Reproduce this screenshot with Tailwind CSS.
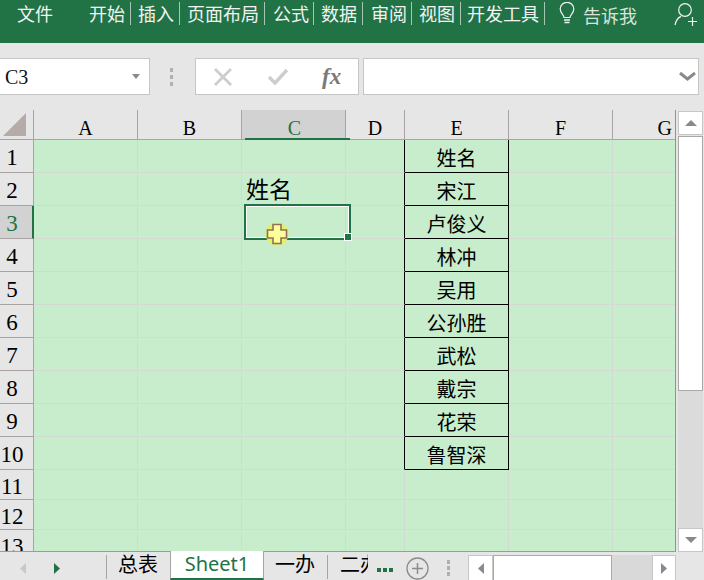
<!DOCTYPE html>
<html lang="zh">
<head>
<meta charset="utf-8">
<script src="https://cdn.jsdelivr.net/npm/@tailwindcss/browser@4"></script>
</head>
<body class="m-0">
<div class="relative w-[704px] h-[580px] overflow-hidden bg-[#e6e6e6] flex flex-col font-['Noto_Sans_CJK_SC',sans-serif]">

  <!-- Ribbon tabs -->
  <div class="h-[43px] shrink-0 bg-[#217346] text-[#f2f2f2] text-[18px] leading-[26px] flex items-start pl-[17px]">
    <div class="h-[26px] mr-[36px]">文件</div>
    <div class="h-[26px]">开始</div><div class="w-px h-[23px] mt-[2px] ml-[5px] mr-[7px] bg-white/60"></div>
    <div class="h-[26px]">插入</div><div class="w-px h-[23px] mt-[2px] ml-[5px] mr-[7px] bg-white/60"></div>
    <div class="h-[26px]">页面布局</div><div class="w-px h-[23px] mt-[2px] ml-[5px] mr-[8px] bg-white/60"></div>
    <div class="h-[26px]">公式</div><div class="w-px h-[23px] mt-[2px] ml-[4px] mr-[7px] bg-white/60"></div>
    <div class="h-[26px]">数据</div><div class="w-px h-[23px] mt-[2px] ml-[5px] mr-[8px] bg-white/60"></div>
    <div class="h-[26px]">审阅</div><div class="w-px h-[23px] mt-[2px] ml-[4px] mr-[7px] bg-white/60"></div>
    <div class="h-[26px]">视图</div><div class="w-px h-[23px] mt-[2px] ml-[5px] mr-[6px] bg-white/60"></div>
    <div class="h-[26px]">开发工具</div><div class="w-px h-[23px] mt-[2px] ml-[5px] mr-[14px] bg-white/60"></div>
    <svg class="mt-[2px] shrink-0" width="16" height="23" viewBox="0 0 16 23" fill="none" stroke="#f2f2f2" stroke-width="1.2">
      <path d="M5 15.500c0-2.500-3.800-4.200-3.800-8.400a6.800 6.800 0 0 1 13.600 0c0 4.200-3.800 5.900-3.800 8.400z"/>
      <path d="M5 18h6M5.500 20.500h5" stroke-width="1.600"/>
    </svg>
    <div class="h-[26px] ml-[8px] text-[#d9e3dc] pt-[2px]">告诉我</div>
    <svg class="ml-[37px] mt-[2px] shrink-0" width="24" height="24" viewBox="0 0 24 24" fill="none" stroke="#f2f2f2" stroke-width="1.2">
      <circle cx="11" cy="8" r="6.300"/>
      <path d="M1 23c1-4.500 3.500-7.500 6-8.600"/>
      <path d="M14 19.500h9M18.500 15v9"/>
    </svg>
  </div>

  <!-- Formula bar -->
  <div class="h-[67px] shrink-0 flex items-start pt-[15px]">
    <div class="w-[150px] h-[37px] bg-white border border-[#c6c6c6] border-l-0 flex items-center justify-between pl-[5px] pr-[9px]">
      <span class="text-[20px] text-[#111] font-['Liberation_Serif',serif]">C3</span>
      <svg width="8" height="5" viewBox="0 0 8 5"><path d="M0 0h8L4 5z" fill="#858a91"/></svg>
    </div>
    <div class="w-[3px] ml-[20px] mt-[10px] flex flex-col gap-[3px]">
      <div class="h-[4px] bg-[#b5aeae]"></div><div class="h-[4px] bg-[#b5aeae]"></div><div class="h-[4px] bg-[#b5aeae]"></div>
    </div>
    <div class="w-[164px] h-[37px] ml-[22px] bg-white border border-[#c6c6c6] flex items-center relative">
      <svg class="ml-[18px]" width="18" height="18" viewBox="0 0 18 18" stroke="#cdcdcd" stroke-width="2.800" fill="none"><path d="M1 1l16 16M17 1L1 17"/></svg>
      <svg class="ml-[36px]" width="20" height="17" viewBox="0 0 20 17" stroke="#cdcdcd" stroke-width="3.400" fill="none"><path d="M1 9l6 6L19 2"/></svg>
      <span class="ml-[34px] text-[23px] leading-none font-bold italic text-[#7a7a7a] font-['Liberation_Serif',serif]">fx</span>
    </div>
    <div class="w-[336px] h-[37px] ml-[4px] bg-white border border-[#c6c6c6] flex items-center justify-end pr-[2px]">
      <svg width="17" height="9" viewBox="0 0 17 9" fill="none" stroke="#858a91" stroke-width="3"><path d="M1 1l7.500 6L16 1"/></svg>
    </div>
  </div>

  <!-- Sheet area -->
  <div class="h-[441px] shrink-0 flex">
    <div class="w-[676px] h-[441px] overflow-hidden grid grid-cols-[34px_104px_104px_104px_59px_104px_104px_63px] grid-rows-[30px_repeat(10,33px)_30px_30px_21px] text-black text-[20px] border-r border-[#8f948f]">
      <!-- header -->
      <div class="border-r border-b border-[#a8a4a4] flex items-end justify-center pb-[3px]">
        <svg width="23" height="23" viewBox="0 0 23 23" class="mr-[4px]"><path d="M23 0v23H0z" fill="#b5aba8"/></svg>
      </div>
      <div class="border-r border-b border-[#a8a4a4] text-center leading-[36px] font-['Liberation_Serif',serif]">A</div>
      <div class="border-r border-b border-[#a8a4a4] text-center leading-[36px] font-['Liberation_Serif',serif]">B</div>
      <div class="bg-[#d2d2d2] border-r border-b border-[#a8a4a4] text-center pl-[2px] leading-[36px] text-[#217346] font-['Liberation_Serif',serif]">C</div>
      <div class="border-r border-b border-[#a8a4a4] text-center leading-[36px] font-['Liberation_Serif',serif]">D</div>
      <div class="border-r border-b border-[#a8a4a4] text-center leading-[36px] font-['Liberation_Serif',serif]">E</div>
      <div class="border-r border-b border-[#a8a4a4] text-center leading-[36px] font-['Liberation_Serif',serif]">F</div>
      <div class="border-b border-[#a8a4a4] text-right pr-[4px] leading-[36px] font-['Liberation_Serif',serif]">G</div>

      <!-- row 1 -->
      <div class="border-r border-b border-[#a8a4a4] pr-[9px] text-center leading-[36px] text-[23px] font-['Liberation_Serif',serif]">1</div>
      <div class="bg-[#c7edcc] border-r border-b border-[#d3d9d3]"></div><div class="bg-[#c7edcc] border-r border-b border-[#d3d9d3]"></div><div class="bg-[#c7edcc] border-r border-b border-[#d3d9d3]"></div>
      <div class="bg-[#c7edcc] border-r border-b border-r-black border-b-[#d3d9d3]"></div>
      <div class="bg-[#c7edcc] border-r border-b border-black text-center leading-[36px]">姓名</div>
      <div class="bg-[#c7edcc] border-r border-b border-[#d3d9d3]"></div><div class="bg-[#c7edcc] border-b border-[#d3d9d3]"></div>
      <!-- row 2 -->
      <div class="border-r border-b border-[#a8a4a4] pr-[9px] text-center leading-[36px] text-[23px] font-['Liberation_Serif',serif]">2</div>
      <div class="bg-[#c7edcc] border-r border-b border-[#d3d9d3]"></div><div class="bg-[#c7edcc] border-r border-b border-[#d3d9d3]"></div>
      <div class="bg-[#c7edcc] border-r border-b border-[#d3d9d3] pl-[4px] text-[23px] leading-[30px] whitespace-nowrap">姓名</div>
      <div class="bg-[#c7edcc] border-r border-b border-r-black border-b-[#d3d9d3]"></div>
      <div class="bg-[#c7edcc] border-r border-b border-black text-center leading-[36px]">宋江</div>
      <div class="bg-[#c7edcc] border-r border-b border-[#d3d9d3]"></div><div class="bg-[#c7edcc] border-b border-[#d3d9d3]"></div>
      <!-- row 3 -->
      <div class="bg-[#d2d2d2] border-r-2 border-r-[#217346] border-b border-b-[#a8a4a4] pr-[8px] text-center leading-[36px] text-[23px] text-[#217346] font-['Liberation_Serif',serif]">3</div>
      <div class="bg-[#c7edcc] border-r border-b border-[#d3d9d3]"></div><div class="bg-[#c7edcc] border-r border-b border-[#d3d9d3]"></div><div class="bg-[#c7edcc] border-r border-b border-[#d3d9d3]"></div>
      <div class="bg-[#c7edcc] border-r border-b border-r-black border-b-[#d3d9d3]"></div>
      <div class="bg-[#c7edcc] border-r border-b border-black text-center leading-[36px]">卢俊义</div>
      <div class="bg-[#c7edcc] border-r border-b border-[#d3d9d3]"></div><div class="bg-[#c7edcc] border-b border-[#d3d9d3]"></div>
      <!-- row 4 -->
      <div class="border-r border-b border-[#a8a4a4] pr-[9px] text-center leading-[36px] text-[23px] font-['Liberation_Serif',serif]">4</div>
      <div class="bg-[#c7edcc] border-r border-b border-[#d3d9d3]"></div><div class="bg-[#c7edcc] border-r border-b border-[#d3d9d3]"></div><div class="bg-[#c7edcc] border-r border-b border-[#d3d9d3]"></div>
      <div class="bg-[#c7edcc] border-r border-b border-r-black border-b-[#d3d9d3]"></div>
      <div class="bg-[#c7edcc] border-r border-b border-black text-center leading-[36px]">林冲</div>
      <div class="bg-[#c7edcc] border-r border-b border-[#d3d9d3]"></div><div class="bg-[#c7edcc] border-b border-[#d3d9d3]"></div>
      <!-- row 5 -->
      <div class="border-r border-b border-[#a8a4a4] pr-[9px] text-center leading-[36px] text-[23px] font-['Liberation_Serif',serif]">5</div>
      <div class="bg-[#c7edcc] border-r border-b border-[#d3d9d3]"></div><div class="bg-[#c7edcc] border-r border-b border-[#d3d9d3]"></div><div class="bg-[#c7edcc] border-r border-b border-[#d3d9d3]"></div>
      <div class="bg-[#c7edcc] border-r border-b border-r-black border-b-[#d3d9d3]"></div>
      <div class="bg-[#c7edcc] border-r border-b border-black text-center leading-[36px]">吴用</div>
      <div class="bg-[#c7edcc] border-r border-b border-[#d3d9d3]"></div><div class="bg-[#c7edcc] border-b border-[#d3d9d3]"></div>
      <!-- row 6 -->
      <div class="border-r border-b border-[#a8a4a4] pr-[9px] text-center leading-[36px] text-[23px] font-['Liberation_Serif',serif]">6</div>
      <div class="bg-[#c7edcc] border-r border-b border-[#d3d9d3]"></div><div class="bg-[#c7edcc] border-r border-b border-[#d3d9d3]"></div><div class="bg-[#c7edcc] border-r border-b border-[#d3d9d3]"></div>
      <div class="bg-[#c7edcc] border-r border-b border-r-black border-b-[#d3d9d3]"></div>
      <div class="bg-[#c7edcc] border-r border-b border-black text-center leading-[36px]">公孙胜</div>
      <div class="bg-[#c7edcc] border-r border-b border-[#d3d9d3]"></div><div class="bg-[#c7edcc] border-b border-[#d3d9d3]"></div>
      <!-- row 7 -->
      <div class="border-r border-b border-[#a8a4a4] pr-[9px] text-center leading-[36px] text-[23px] font-['Liberation_Serif',serif]">7</div>
      <div class="bg-[#c7edcc] border-r border-b border-[#d3d9d3]"></div><div class="bg-[#c7edcc] border-r border-b border-[#d3d9d3]"></div><div class="bg-[#c7edcc] border-r border-b border-[#d3d9d3]"></div>
      <div class="bg-[#c7edcc] border-r border-b border-r-black border-b-[#d3d9d3]"></div>
      <div class="bg-[#c7edcc] border-r border-b border-black text-center leading-[36px]">武松</div>
      <div class="bg-[#c7edcc] border-r border-b border-[#d3d9d3]"></div><div class="bg-[#c7edcc] border-b border-[#d3d9d3]"></div>
      <!-- row 8 -->
      <div class="border-r border-b border-[#a8a4a4] pr-[9px] text-center leading-[36px] text-[23px] font-['Liberation_Serif',serif]">8</div>
      <div class="bg-[#c7edcc] border-r border-b border-[#d3d9d3]"></div><div class="bg-[#c7edcc] border-r border-b border-[#d3d9d3]"></div><div class="bg-[#c7edcc] border-r border-b border-[#d3d9d3]"></div>
      <div class="bg-[#c7edcc] border-r border-b border-r-black border-b-[#d3d9d3]"></div>
      <div class="bg-[#c7edcc] border-r border-b border-black text-center leading-[36px]">戴宗</div>
      <div class="bg-[#c7edcc] border-r border-b border-[#d3d9d3]"></div><div class="bg-[#c7edcc] border-b border-[#d3d9d3]"></div>
      <!-- row 9 -->
      <div class="border-r border-b border-[#a8a4a4] pr-[9px] text-center leading-[36px] text-[23px] font-['Liberation_Serif',serif]">9</div>
      <div class="bg-[#c7edcc] border-r border-b border-[#d3d9d3]"></div><div class="bg-[#c7edcc] border-r border-b border-[#d3d9d3]"></div><div class="bg-[#c7edcc] border-r border-b border-[#d3d9d3]"></div>
      <div class="bg-[#c7edcc] border-r border-b border-r-black border-b-[#d3d9d3]"></div>
      <div class="bg-[#c7edcc] border-r border-b border-black text-center leading-[36px]">花荣</div>
      <div class="bg-[#c7edcc] border-r border-b border-[#d3d9d3]"></div><div class="bg-[#c7edcc] border-b border-[#d3d9d3]"></div>
      <!-- row 10 -->
      <div class="border-r border-b border-[#a8a4a4] pr-[9px] text-center leading-[36px] text-[23px] font-['Liberation_Serif',serif]">10</div>
      <div class="bg-[#c7edcc] border-r border-b border-[#d3d9d3]"></div><div class="bg-[#c7edcc] border-r border-b border-[#d3d9d3]"></div><div class="bg-[#c7edcc] border-r border-b border-[#d3d9d3]"></div>
      <div class="bg-[#c7edcc] border-r border-b border-r-black border-b-[#d3d9d3]"></div>
      <div class="bg-[#c7edcc] border-r border-b border-black text-center leading-[36px]">鲁智深</div>
      <div class="bg-[#c7edcc] border-r border-b border-[#d3d9d3]"></div><div class="bg-[#c7edcc] border-b border-[#d3d9d3]"></div>
      <!-- row 11 -->
      <div class="border-r border-b border-[#a8a4a4] pr-[9px] text-center leading-[34px] text-[23px] font-['Liberation_Serif',serif]">11</div>
      <div class="bg-[#c7edcc] border-r border-b border-[#d3d9d3]"></div><div class="bg-[#c7edcc] border-r border-b border-[#d3d9d3]"></div><div class="bg-[#c7edcc] border-r border-b border-[#d3d9d3]"></div><div class="bg-[#c7edcc] border-r border-b border-[#d3d9d3]"></div><div class="bg-[#c7edcc] border-r border-b border-[#d3d9d3]"></div><div class="bg-[#c7edcc] border-r border-b border-[#d3d9d3]"></div><div class="bg-[#c7edcc] border-b border-[#d3d9d3]"></div>
      <!-- row 12 -->
      <div class="border-r border-b border-[#a8a4a4] pr-[9px] text-center leading-[34px] text-[23px] font-['Liberation_Serif',serif]">12</div>
      <div class="bg-[#c7edcc] border-r border-b border-[#d3d9d3]"></div><div class="bg-[#c7edcc] border-r border-b border-[#d3d9d3]"></div><div class="bg-[#c7edcc] border-r border-b border-[#d3d9d3]"></div><div class="bg-[#c7edcc] border-r border-b border-[#d3d9d3]"></div><div class="bg-[#c7edcc] border-r border-b border-[#d3d9d3]"></div><div class="bg-[#c7edcc] border-r border-b border-[#d3d9d3]"></div><div class="bg-[#c7edcc] border-b border-[#d3d9d3]"></div>
      <!-- row 13 -->
      <div class="border-r border-[#a8a4a4] pr-[9px] text-center leading-[34px] text-[23px] overflow-hidden font-['Liberation_Serif',serif]">13</div>
      <div class="bg-[#c7edcc] border-r border-[#d3d9d3]"></div><div class="bg-[#c7edcc] border-r border-[#d3d9d3]"></div><div class="bg-[#c7edcc] border-r border-[#d3d9d3]"></div><div class="bg-[#c7edcc] border-r border-[#d3d9d3]"></div><div class="bg-[#c7edcc] border-r border-[#d3d9d3]"></div><div class="bg-[#c7edcc] border-r border-[#d3d9d3]"></div><div class="bg-[#c7edcc]"></div>
    </div>

    <!-- Vertical scrollbar -->
    <div class="w-[28px] h-[442px] pl-[2px] pr-px pt-px flex flex-col">
      <div class="h-[24px] shrink-0 bg-white border border-[#c6c6c6] flex items-center justify-center">
        <svg width="12" height="6" viewBox="0 0 12 6"><path d="M6 0l6 6H0z" fill="#858a91"/></svg>
      </div>
      <div class="h-[255px] shrink-0 mt-px bg-white border border-[#ada8a8]"></div>
      <div class="flex-1 bg-[#dbdbdb]"></div>
      <div class="h-[24px] shrink-0 bg-white border border-[#c6c6c6] flex items-center justify-center">
        <svg width="12" height="6" viewBox="0 0 12 6"><path d="M0 0h12L6 6z" fill="#858a91"/></svg>
      </div>
    </div>
  </div>

  <!-- Sheet tabs -->
  <div class="h-[29px] shrink-0 border-t border-[#9b9b9b] flex items-start text-[20px] leading-[24px] text-black w-[676px]">
    <svg class="ml-[20px] mt-[11px] shrink-0" width="6" height="11" viewBox="0 0 6 11"><path d="M6 0v11L0 5.500z" fill="#c8c8c8"/></svg>
    <svg class="ml-[28px] mt-[11px] shrink-0" width="6" height="11" viewBox="0 0 6 11"><path d="M0 0v11l6-5.500z" fill="#217346"/></svg>
    <div class="w-px h-[24px] mt-[3px] ml-[46px] bg-[#a8a4a4] shrink-0"></div>
    <div class="ml-[11px] w-[40px] shrink-0">总表</div>
    <div class="ml-[12px] w-[94px] h-[29px] -mt-px pt-px bg-white border-x border-[#a8a4a4] border-b-2 border-b-[#217346] text-center text-[#217346] font-['Noto_Sans',sans-serif] shrink-0">Sheet1</div>
    <div class="ml-[11px] w-[40px] shrink-0">一办</div>
    <div class="w-px h-[24px] mt-[3px] ml-[12px] bg-[#a8a4a4] shrink-0"></div>
    <div class="ml-[12px] w-[28px] overflow-hidden whitespace-nowrap shrink-0">二办</div>
    <div class="ml-[9px] mt-[16px] flex gap-[2px] shrink-0">
      <div class="w-[4px] h-[4px] bg-[#217346]"></div><div class="w-[4px] h-[4px] bg-[#217346]"></div><div class="w-[4px] h-[4px] bg-[#217346]"></div>
    </div>
    <svg class="ml-[13px] mt-[5px] shrink-0" width="23" height="23" viewBox="0 0 23 23" fill="none" stroke="#8c8c8c"><circle cx="11.500" cy="11.500" r="10.500" stroke-width="1.300"/><path d="M6 11.500h11M11.500 6v11" stroke-width="1.500"/></svg>
    <div class="w-[3px] ml-[18px] mt-[8px] flex flex-col gap-[2px] shrink-0">
      <div class="h-[4px] bg-[#b5aeae]"></div><div class="h-[4px] bg-[#b5aeae]"></div><div class="h-[4px] bg-[#b5aeae]"></div>
    </div>
    <div class="ml-[18px] mt-[3px] w-[208px] h-[26px] flex shrink-0">
      <div class="w-[25px] bg-white border border-[#c6c6c6] flex items-center justify-center">
        <svg width="6" height="11" viewBox="0 0 6 11"><path d="M6 0v11L0 5.500z" fill="#858a91"/></svg>
      </div>
      <div class="w-[119px] bg-white border border-[#ada8a8]"></div>
      <div class="flex-1 bg-[#d9d9d9]"></div>
      <div class="w-[24px] bg-white border border-[#c6c6c6] flex items-center justify-center">
        <svg width="6" height="11" viewBox="0 0 6 11"><path d="M0 0v11l6-5.500z" fill="#858a91"/></svg>
      </div>
    </div>
  </div>

  <!-- Selection over the grid -->
  <div class="absolute left-[244px] top-[204px] w-[107px] h-[36px] border-2 border-[#217346]">
    <div class="w-full h-full border border-white"></div>
    <div class="absolute -right-[3px] -bottom-[3px] w-[8px] h-[8px] bg-[#217346] border border-white"></div>
  </div>
  <!-- Column C header underline -->
  <div class="absolute left-[245px] top-[138px] w-[105px] h-[2px] bg-[#217346]"></div>
  <!-- Cell cursor -->
  <svg class="absolute left-[265px] top-[222px]" width="24" height="24" viewBox="0 0 24 24">
    <circle cx="12" cy="12" r="11.500" fill="#e6f063"/>
    <path d="M8 2.500h8v5.500h5.500v8H16v5.500H8V16H2.500V8H8z" fill="#ffff99" stroke="#8f6f5f" stroke-width="1.600"/>
  </svg>
</div>
</body>
</html>
